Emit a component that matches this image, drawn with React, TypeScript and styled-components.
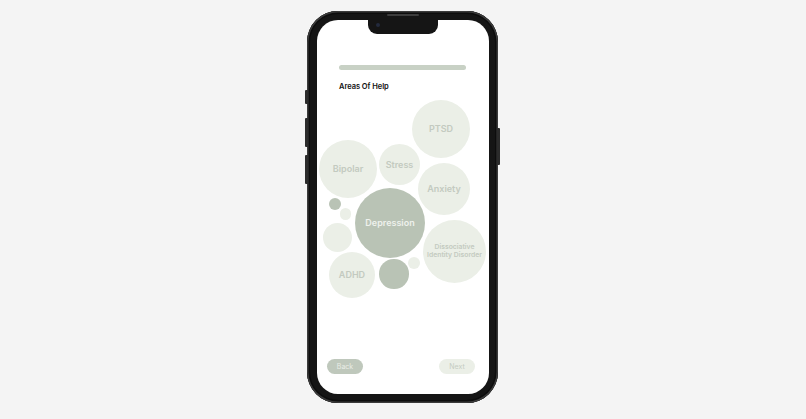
import React from "react";
import styled, { createGlobalStyle } from "styled-components";

const GlobalStyle = createGlobalStyle`
  * { box-sizing: border-box; }
  html, body { margin: 0; padding: 0; background: #f4f4f4; }
  body { font-family: Inter, "Noto Sans", sans-serif; }
`;

interface Bubble {
  label?: string;
  x: number;
  y: number;
  r: number;
  tone: "light" | "dark";
  small?: boolean;
}

// bubble centres/radii, relative to the canvas
const bubbles: Bubble[] = [
  { label: "PTSD", x: 124, y: 33, r: 29, tone: "light" },
  { label: "Bipolar", x: 31, y: 73, r: 29, tone: "light" },
  { label: "Stress", x: 82.5, y: 69, r: 20.5, tone: "light" },
  { label: "Anxiety", x: 127, y: 93, r: 26, tone: "light" },
  { x: 18, y: 108, r: 6, tone: "dark" },
  { x: 28.5, y: 118.5, r: 5.7, tone: "light" },
  { label: "Depression", x: 73, y: 127, r: 35, tone: "dark" },
  { x: 20, y: 141.5, r: 14.5, tone: "light" },
  { label: "Dissociative\nIdentity Disorder", x: 137.5, y: 155.5, r: 31.5, tone: "light", small: true },
  { label: "ADHD", x: 35, y: 179, r: 23, tone: "light" },
  { x: 77, y: 178.5, r: 14.7, tone: "dark" },
  { x: 97, y: 167, r: 6, tone: "light" },
];

const Page = styled.div`
  width: 806px;
  height: 419px;
  display: flex;
  align-items: center;
  justify-content: center;
`;

const Phone = styled.div`
  position: relative;
  width: 191px;
  height: 392px;
  margin: -5px 0 0 -1px;
  padding: 9px 9px 9px 10px;
  border-radius: 31px;
  background: #151515;
  box-shadow: inset 0 0 0 1.5px #3b3b3b, inset 0 0 0 3px #0d0d0d;
`;

const SideKey = styled.span<{ $side: "left" | "right"; $top: number; $h: number }>`
  position: absolute;
  ${(p) => (p.$side === "left" ? "left: -2px;" : "right: -2px;")}
  top: ${(p) => p.$top}px;
  width: 3px;
  height: ${(p) => p.$h}px;
  border-radius: 1px;
  background: #2b2b2b;
`;

const Speaker = styled.span`
  position: absolute;
  top: 3px;
  left: 80px;
  width: 32px;
  height: 1.5px;
  border-radius: 1px;
  background: #3d3d3d;
`;

const Screen = styled.div`
  position: relative;
  height: 100%;
  border-radius: 21px;
  background: #ffffff;
  overflow: hidden;
  display: flex;
  flex-direction: column;
`;

const Notch = styled.div`
  position: absolute;
  top: 0;
  left: 51px;
  width: 70px;
  height: 14px;
  background: #151515;
  border-radius: 0 0 9px 9px;
`;

const Camera = styled.span`
  position: absolute;
  top: 3px;
  left: 8px;
  width: 4px;
  height: 4px;
  border-radius: 50%;
  background: #232a3d;
`;

const Header = styled.div`
  padding: 45px 23px 0 22px;
  display: flex;
  flex-direction: column;
  gap: 12px;
`;

const Progress = styled.div`
  height: 4.5px;
  border-radius: 3px;
  background: #c8d1c5;
`;

const Title = styled.h1`
  margin: 0;
  font-size: 7.5px;
  font-weight: 600;
  color: #111111;
  letter-spacing: -0.05px;
`;

const Canvas = styled.div`
  position: relative;
  margin-top: 5px;
  height: 210px;
`;

const Circle = styled.div<{ $tone: "light" | "dark"; $small?: boolean }>`
  position: absolute;
  border-radius: 50%;
  display: flex;
  align-items: center;
  justify-content: center;
  text-align: center;
  white-space: pre-line;
  background: ${(p) => (p.$tone === "dark" ? "#b9c3b5" : "#ebefe7")};
  color: ${(p) => (p.$tone === "dark" ? "#eef1ec" : "#c3cac0")};
  font-size: ${(p) => (p.$small ? "6.8px" : "9px")};
  line-height: ${(p) => (p.$small ? "8px" : "10px")};
  font-weight: 600;
`;

const Actions = styled.div`
  margin-top: auto;
  padding: 0 14px 20px 10px;
  display: flex;
  justify-content: space-between;
`;

const Pill = styled.button<{ $primary?: boolean }>`
  width: 36px;
  height: 15px;
  padding: 0;
  border: none;
  border-radius: 8px;
  font-family: Inter, sans-serif;
  font-size: 7px;
  background: ${(p) => (p.$primary ? "#bfc8bc" : "#ebefe7")};
  color: ${(p) => (p.$primary ? "#e9ede6" : "#c5ccc2")};
`;

export default function App() {
  return (
    <>
      <GlobalStyle />
      <Page>
        <Phone>
          <Speaker />
          <SideKey $side="left" $top={79} $h={14} />
          <SideKey $side="left" $top={107} $h={29} />
          <SideKey $side="left" $top={144} $h={29} />
          <SideKey $side="right" $top={117} $h={37} />
          <Screen>
            <Notch>
              <Camera />
            </Notch>
            <Header>
              <Progress />
              <Title>Areas Of Help</Title>
            </Header>
            <Canvas>
              {bubbles.map((b, i) => (
                <Circle
                  key={i}
                  $tone={b.tone}
                  $small={b.small}
                  style={{ left: b.x - b.r, top: b.y - b.r, width: b.r * 2, height: b.r * 2 }}
                >
                  {b.label}
                </Circle>
              ))}
            </Canvas>
            <Actions>
              <Pill $primary>Back</Pill>
              <Pill>Next</Pill>
            </Actions>
          </Screen>
        </Phone>
      </Page>
    </>
  );
}
